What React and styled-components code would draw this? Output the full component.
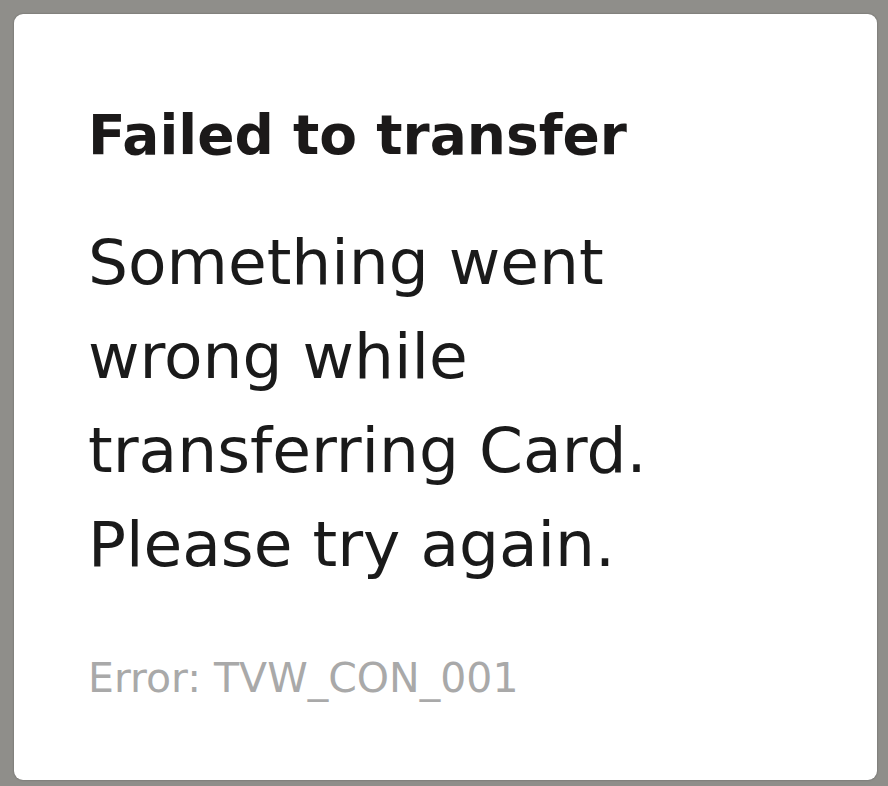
import React from 'react';
import styled, { createGlobalStyle } from 'styled-components';

const GlobalStyle = createGlobalStyle`
  html, body {
    margin: 0;
    padding: 0;
    background: #8f8e8a;
  }
  body {
    font-family: 'DejaVu Sans', 'Noto Sans', sans-serif;
  }
`;

const Screen = styled.div`
  box-sizing: border-box;
  width: 888px;
  height: 786px;
  padding: 14px 11px 6px 14px;
  background: #8f8e8a;
  display: flex;
`;

const Dialog = styled.div`
  flex: 1;
  background: #fff;
  border-radius: 9px;
  box-shadow: 0 0 2px rgba(0, 0, 0, 0.35);
  padding: 89px 74px 0 74px;
  display: flex;
  flex-direction: column;
`;

const Title = styled.h1`
  margin: 0;
  font-size: 55px;
  line-height: 64px;
  font-weight: 700;
  color: #1b1919;
`;

const Message = styled.p`
  margin: 49px 0 0;
  font-size: 63px;
  line-height: 94px;
  font-weight: 400;
  color: #1a1a1a;
  width: 640px;
`;

const ErrorCode = styled.span`
  margin-top: 61px;
  font-size: 41px;
  line-height: 50px;
  color: #a9a9a9;
`;

export default function App() {
  return (
    <>
      <GlobalStyle />
      <Screen>
        <Dialog>
          <Title>Failed to transfer</Title>
          <Message>
            Something went wrong while transferring Card. Please try again.
          </Message>
          <ErrorCode>Error: TVW_CON_001</ErrorCode>
        </Dialog>
      </Screen>
    </>
  );
}
